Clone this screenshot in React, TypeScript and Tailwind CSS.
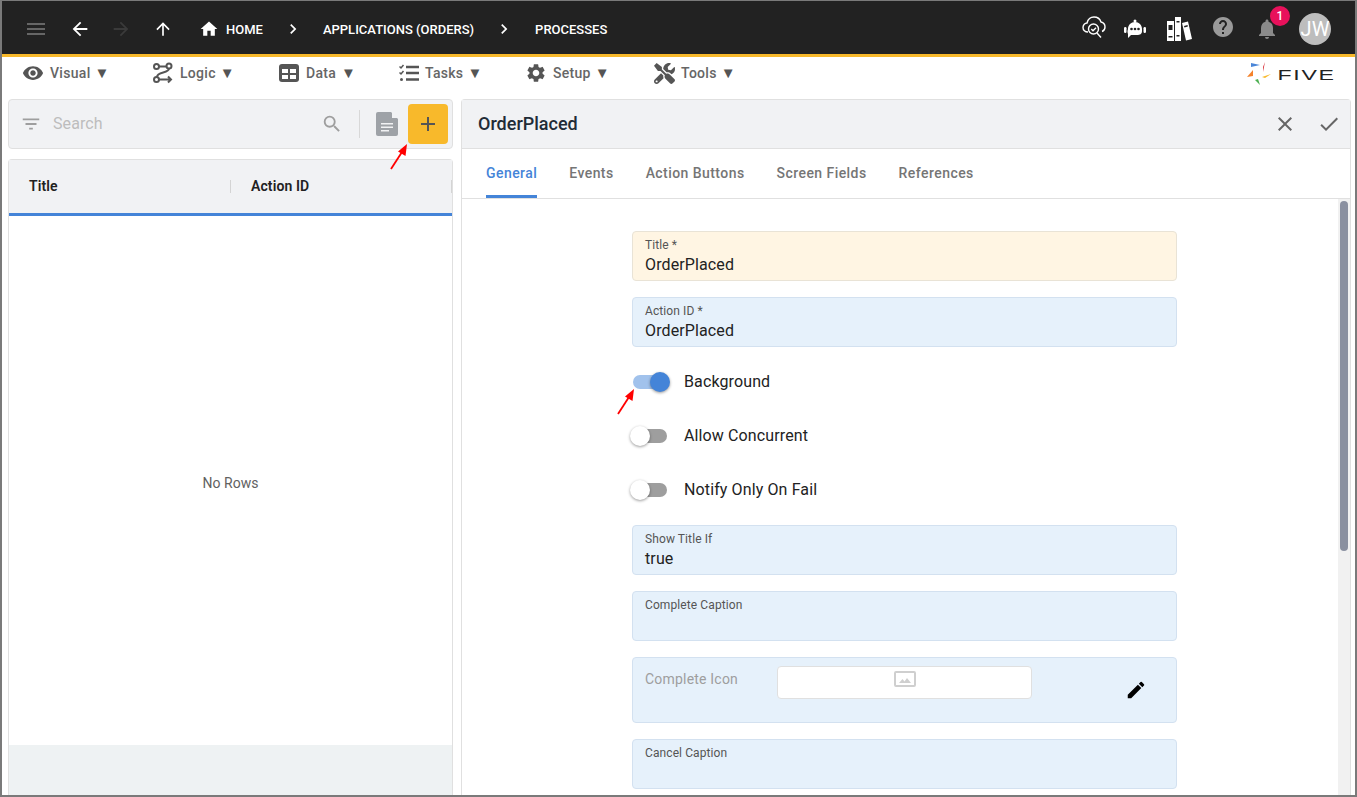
import {
  MdAdd, MdArrowBack, MdArrowForward, MdArrowUpward, MdCheck, MdChevronRight, MdClose, MdEdit,
  MdFilterList, MdHelp, MdHome, MdMenu, MdNotifications, MdSearch, MdSettings, MdVisibility,
} from "react-icons/md";
import { FaTools } from "react-icons/fa";

const LogicIcon = () => (
  <svg width="22" height="22" viewBox="0 0 22 22" fill="none" stroke="#555" strokeWidth="2">
    <circle cx="4.5" cy="4.5" r="2.5" />
    <circle cx="17" cy="4" r="2.5" />
    <circle cx="4.5" cy="17.5" r="2.5" />
    <path d="M7 4.5h7.5M17 6.5c0 5-12 3-12 8.5M7 17.5h11M16 14.5l3 3-3 3" />
  </svg>
);

const DataIcon = () => (
  <svg width="20" height="18" viewBox="0 0 20 18">
    <rect width="20" height="18" rx="3" fill="#555" />
    <path d="M3 5h6v4H3zM11 5h6v4h-6zM3 11h6v4H3zM11 11h6v4h-6z" fill="#fff" />
  </svg>
);

const TasksIcon = () => (
  <svg width="20" height="18" viewBox="0 0 20 18" fill="none" stroke="#555" strokeWidth="2">
    <path d="M7 3h13M7 9h13M7 15.500h13" strokeWidth="2.400" />
    <path d="M.5 2.500l1.500 1.500 2.500-3M.5 8.500l1.500 1.500 2.500-3" strokeWidth="1.500" />
    <circle cx="2.500" cy="15.500" r="1.500" fill="#555" stroke="none" />
  </svg>
);

const CloudIcon = () => (
  <svg width="24" height="24" viewBox="0 0 24 24" fill="none" stroke="#fff" strokeWidth="1.4">
    <path d="M6 17c-3 0-5-2-5-4.500S3 8 5 8c1-4 4-6 7-6 3.500 0 6 2 7 5 2.500 .5 4 2.500 4 5s-1.500 4-3 4.500" />
    <circle cx="11.500" cy="14" r="5" />
    <path d="M9.300 14l1.700 1.700 3-3M15 18l4 4.500" />
  </svg>
);

const RobotIcon = () => (
  <svg width="24" height="20" viewBox="0 0 24 20">
    <circle cx="12" cy="2" r="1.500" fill="#fff" />
    <path d="M5 10c0-4 3-7 7-7s7 3 7 7v2c0 3-2 4-5 4H8l-3 3v-4c-.5-1-.5-2-.5-3z" fill="#fff" />
    <rect x="1" y="8" width="2.500" height="6" rx="1.200" fill="#fff" />
    <rect x="20.500" y="8" width="2.500" height="6" rx="1.200" fill="#fff" />
    <circle cx="8.500" cy="10" r="1.300" fill="#222" />
    <circle cx="12" cy="10" r="1.300" fill="#222" />
    <circle cx="15.500" cy="10" r="1.300" fill="#222" />
  </svg>
);

const BooksIcon = () => (
  <svg width="25" height="24" viewBox="0 0 25 24" fill="#fff">
    <path d="M0 4h7v20H0zM8 0h6v24H8z" />
    <path d="M15 6l6-1.500L25 22l-6 1.500z" />
    <path d="M1.500 8h4v5h-4zM9.500 4h3v1.500h-3zM9.500 18h3v1.500h-3zM1.500 19h4v1.500h-4zM17 9l3.500-1 .4 1.500-3.500 1z" fill="#222" />
  </svg>
);

const DocIcon = () => (
  <svg width="22" height="24" viewBox="0 0 22 24">
    <path d="M2 0h13l7 7v15a2 2 0 0 1-2 2H2a2 2 0 0 1-2-2V2a2 2 0 0 1 2-2z" fill="#9ea2a7" />
    <path d="M16 0l6 6h-6z" fill="#f1f2f4" />
    <path d="M5 11h12v1.500H5zM5 14.500h12V16H5zM5 18h8v1.500H5z" fill="#f1f2f4" />
  </svg>
);

const ImageIcon = () => (
  <svg width="22" height="16" viewBox="0 0 22 16" fill="none">
    <rect x="1" y="1" width="20" height="14" rx="1" stroke="#cfcfcf" strokeWidth="2" />
    <path d="M5 12l3.500-4 2 2.500 2.500-3.500 4 5z" fill="#cfcfcf" />
  </svg>
);

const Arrow = ({ className }: { className: string }) => (
  <svg className={className} width="18" height="26" viewBox="0 0 18 26">
    <path d="M1 25L12 8" stroke="#f00" strokeWidth="1.800" />
    <path d="M17 0L15.500 12L8 7.500z" fill="#f00" />
  </svg>
);

const Field = ({ label, value, tint }: { label: string; value?: string; tint?: boolean }) => (
  <div className={`h-[50px] shrink-0 rounded border px-[12px] pt-[5px] ${tint ? "bg-[#fff5e3] border-[#e9e3d6]" : "bg-[#e6f1fb] border-[#d3e1f0]"}`}>
    <div className="text-[12px] leading-[16px] tracking-[0.1px] text-[#555]">{label}</div>
    <div className="text-[16px] leading-[20px] pt-[2px] tracking-[0.12px] text-[#222]">{value}</div>
  </div>
);

const Toggle = ({ label, on }: { label: string; on?: boolean }) => (
  <div className="h-[38px] shrink-0 flex items-center">
    <div className="relative w-[52px] h-[20px]">
      <div className={`absolute top-[3px] w-[34px] h-[14px] rounded-full ${on ? "left-[1px] bg-[#a1c2ec]" : "left-[1px] bg-[#9e9e9e]"}`} />
      <div className={`absolute top-0 w-[20px] h-[20px] rounded-full shadow-[0_1px_3px_rgba(0,0,0,0.4)] ${on ? "left-[18px] bg-[#4484d8]" : "-left-[2px] bg-white"}`} />
    </div>
    <span className="text-[16px] tracking-[0.12px] text-[#222]">{label}</span>
  </div>
);

const menu = [
  { label: "Visual", icon: <MdVisibility size={22} />, w: "w-[130px]", gap: "gap-[6px]" },
  { label: "Logic", icon: <LogicIcon />, w: "w-[127px]", gap: "gap-[6px]" },
  { label: "Data", icon: <DataIcon />, w: "w-[120px]", gap: "gap-[7px]" },
  { label: "Tasks", icon: <TasksIcon />, w: "w-[126px]", gap: "gap-[6px]" },
  { label: "Setup", icon: <MdSettings size={22} />, w: "w-[129px]", gap: "gap-[6px]" },
  { label: "Tools", icon: <FaTools size={21} />, w: "w-[100px]", gap: "gap-[6px]" },
];

const tabs = ["General", "Events", "Action Buttons", "Screen Fields", "References"];

export default function App() {
  return (
    <div className="w-[1357px] h-[797px] overflow-hidden flex flex-col bg-white border-t border-l-2 border-r-2 border-b-2 border-[#7a7a7a] font-['Roboto',sans-serif] relative">
      {/* top bar */}
      <div className="h-[56px] shrink-0 bg-[#222] border-b-[3px] border-[#f8b92b] flex items-center pt-[2px] text-white">
        <MdMenu size={24} className="ml-[22px] text-[#666]" />
        <MdArrowBack size={22} className="ml-[21px]" />
        <MdArrowForward size={22} className="ml-[19px] text-[#3a3a3a]" />
        <MdArrowUpward size={20} className="ml-[21px]" />
        <MdHome size={20} className="ml-[26px]" />
        <span className="ml-[7px] mt-[2px] text-[13px] font-medium">HOME</span>
        <MdChevronRight size={20} className="ml-[20px]" />
        <span className="ml-[20px] mt-[2px] text-[13px] font-medium">APPLICATIONS (ORDERS)</span>
        <MdChevronRight size={20} className="ml-[20px]" />
        <span className="ml-[21px] mt-[2px] text-[13px] font-medium">PROCESSES</span>
        <div className="ml-auto flex items-center pr-[24px]">
          <div className="-mt-[3px]"><CloudIcon /></div>
          <div className="ml-[17px]"><RobotIcon /></div>
          <div className="ml-[20px]"><BooksIcon /></div>
          <MdHelp size={24} className="ml-[19px] -mt-[3px] text-[#9a9a9a]" />
          <div className="relative ml-[20px]">
            <MdNotifications size={24} className="text-[#8a8a8a]" />
            <span className="absolute -top-[11px] left-[15px] w-[20px] h-[20px] rounded-full bg-[#e8115b] text-white text-[12px] font-medium flex items-center justify-center">1</span>
          </div>
          <div className="ml-[20px] w-[32px] h-[32px] rounded-full bg-[#bdbdbd] text-white text-[20px] flex items-center justify-center">JW</div>
        </div>
      </div>

      {/* menu bar */}
      <div className="h-[42px] shrink-0 flex items-start pl-[20px] pt-[5px] text-[#555]">
        {menu.map(m => (
          <div key={m.label} className={`${m.w} flex items-center ${m.gap} h-[22px]`}>
            {m.icon}
            <span className="text-[14px] font-medium tracking-[0.3px] text-[#666]">{m.label}</span>
            <span className="text-[15px] -ml-[2px]">▼</span>
          </div>
        ))}
        <div className="ml-auto mr-[19px] flex items-center">
          <svg width="26" height="25" viewBox="0 0 26 25">
            <path d="M4 1L13 3L4 5z" fill="#4a86d8" />
            <path d="M18 0L16 5L16 10z" fill="#d9363e" />
            <path d="M24 12L15 15L18 16z" fill="#f8b92b" />
            <path d="M13 23L11 17L8 18z" fill="#4caf50" />
            <path d="M0 15L6 8L6 14z" fill="#f5822a" />
          </svg>
          <span className="inline-block ml-[16px] mr-[12px] text-[14px] leading-[14px] tracking-[1px] text-[#222] font-['Liberation_Sans',sans-serif] scale-x-[1.65]">FIVE</span>
        </div>
      </div>

      {/* body */}
      <div className="flex-1 min-h-0 flex pl-[6px] gap-[8px]">
        {/* left column */}
        <div className="w-[445px] shrink-0 flex flex-col gap-[10px]">
          <div className="h-[50px] shrink-0 rounded border border-[#e0e0e0] bg-[#f1f2f4] flex items-center pl-[11px] pr-[4px] relative">
            <MdFilterList size={22} className="text-[#9e9e9e]" />
            <span className="ml-[11px] text-[16px] tracking-[0.1px] text-[#bdbdbd]">Search</span>
            <MdSearch size={22} className="ml-auto text-[#9e9e9e]" />
            <div className="ml-[16px] w-px h-[28px] bg-[#d8d8d8]" />
            <div className="ml-[16px]"><DocIcon /></div>
            <div className="ml-[10px] w-[40px] h-[40px] rounded bg-[#f8b92b] flex items-center justify-center">
              <MdAdd size={24} className="text-[#555]" />
            </div>
            <Arrow className="absolute left-[381px] top-[44px] z-10" />
          </div>
          <div className="flex-1 min-h-0 rounded-t border border-b-0 border-[#e0e0e0] flex flex-col">
            <div className="h-[56px] shrink-0 bg-[#f1f2f4] border-b-[3px] border-[#4484d8] flex items-center text-[14px] font-semibold tracking-[0.1px] text-[#212121]">
              <div className="w-[222px] pl-[20px] flex items-center justify-between">
                <span>Title</span>
                <div className="w-px h-[13px] bg-[#d4d4d4]" />
              </div>
              <span className="pl-[20px]">Action ID</span>
              <div className="ml-auto w-px h-[13px] bg-[#d4d4d4]" />
            </div>
            <div className="flex-1 flex items-center justify-center pt-[6px] text-[14px] text-[#616161]">No Rows</div>
            <div className="h-[50px] shrink-0 bg-[#eef2f3]" />
          </div>
        </div>

        {/* right column */}
        <div className="w-[890px] shrink-0 rounded-t border border-b-0 border-[#e0e0e0] flex flex-col min-h-0">
          <div className="h-[49px] shrink-0 bg-[#f1f2f4] border-b border-[#e0e0e0] flex items-center pl-[16px] pr-[9px]">
            <span className="text-[18px] font-medium -mt-[2px] text-[#212b36]">OrderPlaced</span>
            <MdClose size={24} className="ml-auto text-[#666]" />
            <MdCheck size={24} className="ml-[20px] text-[#666]" />
          </div>
          <div className="h-[50px] shrink-0 border-b border-[#e0e0e0] flex pl-[24px] gap-[32px]">
            {tabs.map((t, i) => (
              <div key={t} className={`h-[49px] flex items-center text-[14px] font-medium tracking-[0.44px] ${i === 0 ? "text-[#4484d8] border-b-[3px] border-[#4484d8] pt-[3px]" : "text-[#757575]"}`}>{t}</div>
            ))}
          </div>
          <div className="flex-1 min-h-0 flex overflow-hidden">
            <div className="flex-1 pt-[32px] pl-[170px] pr-[161px] flex flex-col gap-[16px] relative">
              <Field label="Title *" value="OrderPlaced" tint />
              <Field label="Action ID *" value="OrderPlaced" />
              <Toggle label="Background" on />
              <Toggle label="Allow Concurrent" />
              <Toggle label="Notify Only On Fail" />
              <Field label="Show Title If" value="true" />
              <Field label="Complete Caption" />
              <div className="h-[66px] shrink-0 rounded border border-[#d3e1f0] bg-[#e6f1fb] flex items-start pl-[12px] pt-[8px]">
                <span className="w-[132px] text-[14px] tracking-[0.2px] text-[#9e9e9e] pt-[3px]">Complete Icon</span>
                <div className="w-[255px] h-[33px] rounded bg-white border border-[#e0e0e0] flex justify-center pt-[4px]">
                  <ImageIcon />
                </div>
                <MdEdit size={22} className="ml-[93px] mt-[13px] text-black" />
              </div>
              <Field label="Cancel Caption" />
              <Arrow className="absolute left-[155px] top-[190px]" />
            </div>
            <div className="w-[12px] shrink-0 bg-[#f1f1f1] pl-[2px] pt-[2px]">
              <div className="w-[8px] h-[350px] rounded-full bg-[#8a90a0]" />
            </div>
          </div>
        </div>
      </div>
    </div>
  );
}
